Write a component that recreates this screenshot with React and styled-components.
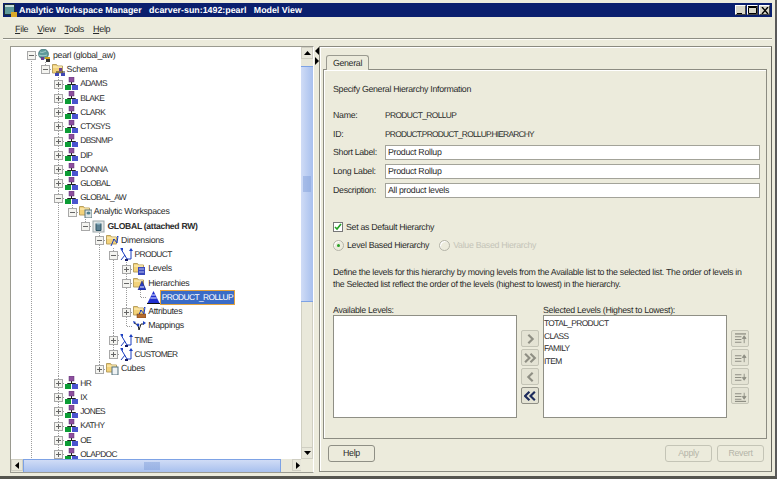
import React from 'react';
import styled, { createGlobalStyle } from 'styled-components';

const BG = '#ecebdc';
const INK = '#2b2b2b';

const GlobalStyle = createGlobalStyle`
  html, body { margin: 0; padding: 0; background: ${BG}; }
  * { box-sizing: border-box; }
`;

const Svg = styled.svg`
  width: 13px;
  height: 13px;
  flex: none;
  display: block;
`;

const UserIcon = () => (
  <Svg viewBox="0 0 13 13">
    <rect x="4" y="0" width="5" height="5" fill="#8d4f9e" stroke="#5d3070" strokeWidth="0.5" />
    <path d="M6.5 5v2M2.5 7.5h8M2.5 7.5v1M10.5 7.5v1" stroke="#222" fill="none" />
    <rect x="0" y="8" width="6" height="5" fill="#0c9c35" />
    <rect x="7" y="8" width="6" height="5" fill="#4a55cf" />
  </Svg>
);

const FolderBase = ({ children }) => (
  <Svg viewBox="0 0 13 13">
    <path d="M0.5 1.5h4l1 1.5h5v7h-10z" fill="#f3d27a" stroke="#b8a060" />
    <path d="M1 4h9" stroke="#fff3c4" />
    {children}
  </Svg>
);

const ARROWS = 'M5 12l3-7 3 4 1-7M8 5l-1 1M12 2l-1 1';

const icons = {
  user: UserIcon,
  pearl: () => (
    <Svg viewBox="0 0 13 13">
      <circle cx="5.5" cy="5" r="5" fill="#5f9a9a" stroke="#37646b" strokeWidth="0.6" />
      <path d="M2 3c2 1 4 0 6-1M1 6c3 1 5 1 8 0" stroke="#b9dcd8" fill="none" strokeWidth="0.8" />
      <rect x="3" y="8" width="3" height="3" fill="#6a3f8f" />
      <rect x="7" y="8" width="5" height="2" fill="#caa020" />
      <rect x="8" y="10" width="4" height="3" fill="#333" />
    </Svg>
  ),
  schema: () => (
    <FolderBase>
      <rect x="7" y="5" width="3" height="3" fill="#6a3f8f" />
      <path d="M4 9h9" stroke="#222" />
      <rect x="3" y="10" width="4" height="3" fill="#3f47b5" />
      <rect x="9" y="10" width="4" height="3" fill="#3f47b5" />
    </FolderBase>
  ),
  aw: () => (
    <FolderBase>
      <rect x="6" y="5" width="7" height="8" fill="#dfe6e6" stroke="#58757d" />
      <ellipse cx="9.5" cy="8" rx="2" ry="1.6" fill="#4f7f8f" />
    </FolderBase>
  ),
  cube: () => (
    <Svg viewBox="0 0 13 13">
      <rect x="1" y="1" width="11" height="11" fill="#e5e8e8" stroke="#9aa5a8" />
      <path d="M4 3.5h5v7H4z" fill="#5b8193" stroke="#2f5565" />
      <ellipse cx="6.5" cy="3.5" rx="2.5" ry="1" fill="#a4c4d0" />
    </Svg>
  ),
  dims: () => (
    <FolderBase>
      <path d={ARROWS} stroke="#1c3fc0" fill="none" />
    </FolderBase>
  ),
  dim: () => (
    <Svg viewBox="0 0 13 13">
      <path d="M1 1l6 10M1 12l4-5M11 2v9M11 11H7" stroke="#1c3fc0" fill="none" />
      <path d="M11 0l2 3H9zM0 0h3v3z" fill="#1c3fc0" />
      <path d="M5 11h3v2H5z" fill="#111a66" />
    </Svg>
  ),
  levels: () => (
    <FolderBase>
      <rect x="5" y="5" width="7" height="8" fill="#3a49bd" />
      <path d="M6 7h5M6 10h5" stroke="#b9c2f0" />
    </FolderBase>
  ),
  hiers: () => (
    <FolderBase>
      <path d="M9 4l4 9H5z" fill="#2a3cc4" stroke="#111a66" strokeWidth="0.5" />
      <path d="M7 10h4" stroke="#f4f4f4" />
    </FolderBase>
  ),
  rollup: () => (
    <Svg viewBox="0 0 13 13">
      <path d="M6.5 0l6 12H.5z" fill="#1f2fd0" />
      <path d="M4.5 4h4M3.3 7h6.4" stroke="#e8ecff" />
      <path d="M0 12.5h13" stroke="#111" />
    </Svg>
  ),
  attrs: () => (
    <FolderBase>
      <path d={ARROWS} stroke="#1c3fc0" fill="none" />
      <rect x="4" y="9" width="9" height="4" fill="#b56a2c" stroke="#6d3f18" strokeWidth="0.5" />
    </FolderBase>
  ),
  maps: () => (
    <Svg viewBox="0 0 13 13">
      <path d="M1 4l4 2 1 5 2-6h3" stroke="#222" fill="none" />
      <circle cx="5" cy="6" r="1.4" fill="#1c3fc0" />
      <path d="M10 2l3 2-3 2zM0 2l3 1-2 2z" fill="#1c3fc0" />
    </Svg>
  ),
  cubes: () => (
    <FolderBase>
      <rect x="6" y="5" width="6" height="8" fill="#eef2f4" stroke="#52707c" />
    </FolderBase>
  ),
};

const u = (label) => ({ label, icon: 'user', closed: true, caps: true });

const tree = {
  label: 'pearl (global_aw)', icon: 'pearl', root: true, children: [
    {
      label: 'Schema', icon: 'schema', last: true, children: [
        u('ADAMS'), u('BLAKE'), u('CLARK'), u('CTXSYS'), u('DBSNMP'), u('DIP'), u('DONNA'), u('GLOBAL'),
        {
          label: 'GLOBAL_AW', icon: 'user', caps: true, children: [
            {
              label: 'Analytic Workspaces', icon: 'aw', last: true, children: [
                {
                  label: 'GLOBAL (attached RW)', icon: 'cube', bold: true, last: true, children: [
                    {
                      label: 'Dimensions', icon: 'dims', children: [
                        {
                          label: 'PRODUCT', icon: 'dim', caps: true, children: [
                            { label: 'Levels', icon: 'levels', closed: true },
                            {
                              label: 'Hierarchies', icon: 'hiers', children: [
                                { label: 'PRODUCT_ROLLUP', icon: 'rollup', caps: true, leaf: true, selected: true, last: true },
                              ],
                            },
                            { label: 'Attributes', icon: 'attrs', closed: true },
                            { label: 'Mappings', icon: 'maps', leaf: true, last: true },
                          ],
                        },
                        { label: 'TIME', icon: 'dim', caps: true, closed: true },
                        { label: 'CUSTOMER', icon: 'dim', caps: true, closed: true, last: true },
                      ],
                    },
                    { label: 'Cubes', icon: 'cubes', closed: true, last: true },
                  ],
                },
              ],
            },
          ],
        },
        u('HR'), u('IX'), u('JONES'), u('KATHY'), u('OE'), u('OLAPDOC'),
      ],
    },
  ],
};

function TreeNode({ node }) {
  const Icon = icons[node.icon];
  return (
    <Node $last={node.last} $root={node.root}>
      <Row>
        <ExpanderSlot>{!node.leaf && <Expander $closed={node.closed} />}</ExpanderSlot>
        <Icon />
        <NodeLabel $bold={node.bold} $caps={node.caps} $selected={node.selected}>{node.label}</NodeLabel>
      </Row>
      {node.children && (
        <Branch>
          {node.children.map((c) => <TreeNode key={c.label} node={c} />)}
        </Branch>
      )}
    </Node>
  );
}

const Chevron = ({ double, left, active }) => {
  const color = active ? '#1d2b5c' : '#8f8f84';
  const points = (x) => (left ? `${x + 4},1 ${x},5 ${x + 4},9` : `${x},1 ${x + 4},5 ${x},9`);
  return (
    <Glyph viewBox="0 0 12 10">
      {double ? (
        <>
          <polyline points={points(1)} fill="none" stroke={color} strokeWidth="2" />
          <polyline points={points(6)} fill="none" stroke={color} strokeWidth="2" />
        </>
      ) : (
        <polyline points={points(4)} fill="none" stroke={color} strokeWidth="2" />
      )}
    </Glyph>
  );
};

const OrderIcon = ({ down, edge }) => (
  <Glyph viewBox="0 0 14 13">
    {edge && !down && <path d="M1 1h12" stroke="#8f8f84" strokeWidth="1.4" />}
    <path d="M1 4h7M1 7h7M1 10h7" stroke="#8f8f84" strokeWidth="1.2" />
    <path
      d={down ? 'M11 3v6M9 7l2 3 2-3z' : 'M11 11V5M9 6l2-3 2 3z'}
      stroke="#8f8f84"
      fill="#8f8f84"
      strokeWidth="1"
    />
    {edge && down && <path d="M1 12.4h12" stroke="#8f8f84" strokeWidth="1.4" />}
  </Glyph>
);

const fields = [
  { label: 'Short Label:', value: 'Product Rollup' },
  { label: 'Long Label:', value: 'Product Rollup' },
  { label: 'Description:', value: 'All product levels' },
];

const selectedLevels = ['TOTAL_PRODUCT', 'CLASS', 'FAMILY', 'ITEM'];

export default function App() {
  return (
    <Window>
      <GlobalStyle />
      <TitleBar>
        <TitleIcon viewBox="0 0 13 13">
          <rect x="0.5" y="0.5" width="10" height="10" fill="#5f9a9a" stroke="#1e3038" />
          <rect x="1" y="1" width="9" height="2" fill="#c6dedb" />
          <rect x="7" y="8" width="6" height="5" fill="#d9a92a" />
        </TitleIcon>
        <TitleText>Analytic Workspace Manager   dcarver-sun:1492:pearl   Model View</TitleText>
        <WindowButtons>
          <WindowButton>
            <svg width="7" height="7" viewBox="0 0 7 7"><path d="M0 6h5v1H0z" fill="#000" /></svg>
          </WindowButton>
          <WindowButton>
            <svg width="9" height="8" viewBox="0 0 9 8"><path d="M.5 1.5h8v6h-8zM0 .5h9" fill="none" stroke="#000" /></svg>
          </WindowButton>
          <WindowButton>
            <svg width="8" height="7" viewBox="0 0 8 7"><path d="M1 0l6 7M7 0L1 7" stroke="#000" strokeWidth="1.4" /></svg>
          </WindowButton>
        </WindowButtons>
      </TitleBar>

      <MenuBar>
        {['File', 'View', 'Tools', 'Help'].map((m) => (
          <MenuItem key={m}><u>{m[0]}</u>{m.slice(1)}</MenuItem>
        ))}
      </MenuBar>

      <Main>
        <LeftPane>
          <TreeArea>
            <Branch $top><TreeNode node={tree} /></Branch>
          </TreeArea>
          <VScroll>
            <ScrollButton>
              <svg width="7" height="4" viewBox="0 0 7 4"><path d="M3.5 0l3.5 4H0z" fill="#000" /></svg>
            </ScrollButton>
            <VThumb><Grip $w={8} $h={16} /></VThumb>
            <VTrack />
            <ScrollButton>
              <svg width="7" height="4" viewBox="0 0 7 4"><path d="M3.5 4L7 0H0z" fill="#000" /></svg>
            </ScrollButton>
          </VScroll>
          <HScroll>
            <ScrollButton>
              <svg width="4" height="7" viewBox="0 0 4 7"><path d="M0 3.5L4 0v7z" fill="#000" /></svg>
            </ScrollButton>
            <HThumb><Grip $w={16} $h={8} /></HThumb>
            <ScrollButton>
              <svg width="4" height="7" viewBox="0 0 4 7"><path d="M4 3.5L0 0v7z" fill="#000" /></svg>
            </ScrollButton>
          </HScroll>
          <Corner />
        </LeftPane>

        <Splitter>
          <svg width="5" height="18" viewBox="0 0 5 18">
            <path d="M0 4l4-4v8zM0 10l4 4-4 4z" fill="#000" />
          </svg>
        </Splitter>

        <RightPane>
          <Tab>General</Tab>
          <TabFrame>
            <Heading>Specify General Hierarchy Information</Heading>
            <InfoGrid>
              <span>Name:</span><Caps>PRODUCT_ROLLUP</Caps>
              <span>ID:</span><Caps $tight>PRODUCT.PRODUCT_ROLLUP.HIERARCHY</Caps>
            </InfoGrid>
            <FieldGrid>
              {fields.map((f) => (
                <React.Fragment key={f.label}>
                  <span>{f.label}</span>
                  <TextField>{f.value}</TextField>
                </React.Fragment>
              ))}
            </FieldGrid>
            <CheckRow>
              <CheckBox>
                <svg width="8" height="8" viewBox="0 0 8 8"><path d="M1 4l2 2 4-5" fill="none" stroke="#21a121" strokeWidth="1.6" /></svg>
              </CheckBox>
              Set as Default Hierarchy
            </CheckRow>
            <RadioRow>
              <RadioOption><Radio $checked />Level Based Hierarchy</RadioOption>
              <RadioOption $disabled><Radio />Value Based Hierarchy</RadioOption>
            </RadioRow>
            <Help>
              Define the levels for this hierarchy by moving levels from the Available list to the selected list. The order of levels in<br />
              the Selected list reflect the order of the levels (highest to lowest) in the hierarchy.
            </Help>
            <Shuttle>
              <ListColumn>
                <span>Available Levels:</span>
                <ListBox />
              </ListColumn>
              <ButtonColumn>
                <IconButton><Chevron /></IconButton>
                <IconButton><Chevron double /></IconButton>
                <IconButton><Chevron left /></IconButton>
                <IconButton $active><Chevron double left active /></IconButton>
              </ButtonColumn>
              <ListColumn>
                <span>Selected Levels (Highest to Lowest):</span>
                <ListBox>
                  {selectedLevels.map((l) => <ListItem key={l}>{l}</ListItem>)}
                </ListBox>
              </ListColumn>
              <ButtonColumn>
                <IconButton><OrderIcon edge /></IconButton>
                <IconButton><OrderIcon /></IconButton>
                <IconButton><OrderIcon down /></IconButton>
                <IconButton><OrderIcon down edge /></IconButton>
              </ButtonColumn>
            </Shuttle>
          </TabFrame>
          <Footer>
            <PushButton>Help</PushButton>
            <FooterRight>
              <PushButton $disabled>Apply</PushButton>
              <PushButton $disabled>Revert</PushButton>
            </FooterRight>
          </Footer>
        </RightPane>
      </Main>
    </Window>
  );
}

const Window = styled.div`
  width: 777px;
  height: 479px;
  overflow: hidden;
  display: flex;
  flex-direction: column;
  padding: 3px 3px 0;
  background: ${BG};
  border-right: 2px solid #5a5a5a;
  border-bottom: 3px solid #55554f;
  font: 8.8px/1 "Liberation Sans", Arial, sans-serif;
  letter-spacing: -0.3px;
  text-rendering: geometricPrecision;
  color: ${INK};
`;

const TitleBar = styled.header`
  height: 14px;
  flex: none;
  display: flex;
  align-items: center;
  background: #0a1f6e;
  color: #fff;
  padding: 0 2px 0 1px;
`;

const TitleIcon = styled.svg`
  width: 13px;
  height: 13px;
  margin-right: 2px;
`;

const TitleText = styled.span`
  font-weight: bold;
  font-size: 8.85px;
  letter-spacing: 0;
  white-space: pre;
  flex: 1;
`;

const WindowButtons = styled.div`
  display: flex;
  gap: 1px;
`;

const WindowButton = styled.span`
  width: 11px;
  height: 10px;
  background: #d8d6c8;
  border: 1px solid;
  border-color: #fff #444 #444 #fff;
  display: flex;
  align-items: center;
  justify-content: center;
  svg { display: block; }
`;

const MenuBar = styled.nav`
  height: 22px;
  flex: none;
  display: flex;
  align-items: center;
  gap: 9px;
  padding: 3px 0 0 12px;
  border-bottom: 1px solid #8d8d83;
  box-shadow: 0 1px 0 #fbfbf5;
`;

const MenuItem = styled.span`
  font-size: 9px;
  u { text-decoration: underline; }
`;

const Main = styled.main`
  flex: 1;
  min-height: 0;
  display: flex;
  padding: 7px 0 3px 7px;
`;

const LeftPane = styled.section`
  width: 304px;
  flex: none;
  display: grid;
  grid-template-columns: 1fr 12px;
  grid-template-rows: 1fr 13px;
  border: 1px solid #9a9a90;
  border-right-color: #fff;
`;

const TreeArea = styled.div`
  background: #fff;
  overflow: hidden;
  min-height: 0;
  padding: 1px 0 0 14px;
`;

const Branch = styled.ul`
  list-style: none;
  margin: 0;
  padding: 0 0 0 ${(p) => (p.$top ? 0 : '13.6px')};
`;

const dots = 'repeating-linear-gradient(to bottom, #9c9c9c 0 1px, transparent 1px 2px)';

const Node = styled.li`
  position: relative;
  &::before {
    content: '';
    position: absolute;
    left: 6px;
    width: 1px;
    top: ${(p) => (p.$root ? '7px' : 0)};
    ${(p) => (p.$last ? 'height: 7px;' : 'bottom: 0;')}
    background: ${dots};
  }
`;

const Row = styled.div`
  height: 14.25px;
  display: flex;
  align-items: center;
  position: relative;
`;

const ExpanderSlot = styled.span`
  width: 13px;
  flex: none;
  height: 100%;
  position: relative;
  &::after {
    content: '';
    position: absolute;
    left: 7px;
    top: 7px;
    width: 6px;
    height: 1px;
    background: repeating-linear-gradient(to right, #9c9c9c 0 1px, transparent 1px 2px);
  }
`;

const Expander = styled.span`
  position: absolute;
  z-index: 1;
  left: 2px;
  top: 3px;
  width: 9px;
  height: 9px;
  background: #f4f4f0;
  border: 1px solid #a8a8a8;
  &::before {
    content: '';
    position: absolute;
    left: 1px;
    top: 3px;
    width: 5px;
    height: 1px;
    background: #666;
  }
  &::after {
    content: '';
    display: ${(p) => (p.$closed ? 'block' : 'none')};
    position: absolute;
    left: 3px;
    top: 1px;
    width: 1px;
    height: 5px;
    background: #666;
  }
`;

const NodeLabel = styled.span`
  margin-left: 1px;
  padding: 2px 1px;
  white-space: nowrap;
  font-size: ${(p) => (p.$caps ? '8.4px' : p.$bold ? '8.6px' : '8.8px')};
  letter-spacing: ${(p) => (p.$caps ? '-0.6px' : '-0.3px')};
  font-weight: ${(p) => (p.$bold ? 'bold' : 'normal')};
  color: ${(p) => (p.$selected ? '#fff' : INK)};
  background: ${(p) => (p.$selected ? '#3a6bc6' : 'transparent')};
  outline: ${(p) => (p.$selected ? '1px solid #e3a33f' : 'none')};
`;

const VScroll = styled.div`
  display: flex;
  flex-direction: column;
  background: #e9e8da;
  min-height: 0;
`;

const HScroll = styled.div`
  display: flex;
  background: #e9e8da;
  min-width: 0;
`;

const Corner = styled.div`
  background: ${BG};
`;

const ScrollButton = styled.span`
  width: 12px;
  height: 12px;
  flex: none;
  display: flex;
  align-items: center;
  justify-content: center;
  background: #e8e7da;
  border: 1px solid #cfcec2;
  svg { display: block; }
`;

const VThumb = styled.div`
  height: 236px;
  margin-top: 7px;
  flex: none;
  display: flex;
  align-items: center;
  justify-content: center;
  background: linear-gradient(to right, #d0dcf6, #a8c0ee);
  border-top: 1px solid #7da2e5;
  border-bottom: 1px solid #7da2e5;
`;

const VTrack = styled.div`
  flex: 1;
  border: 1px solid #d0cfc2;
  border-top: none;
  border-bottom: none;
`;

const HThumb = styled.div`
  width: 258px;
  flex: none;
  display: flex;
  align-items: center;
  justify-content: center;
  margin-right: 11px;
  background: linear-gradient(to bottom, #d0dcf6, #a8c0ee);
  border-left: 1px solid #7da2e5;
  border-right: 1px solid #7da2e5;
  border-top: 1px solid #7da2e5;
`;

const Grip = styled.span`
  width: ${(p) => p.$w}px;
  height: ${(p) => p.$h}px;
  background-image: radial-gradient(#7f9dd8 0.6px, transparent 0.8px);
  background-size: 2px 2px;
`;

const Splitter = styled.div`
  width: 5px;
  flex: none;
  padding: 1px 0 0 1px;
  svg { display: block; }
`;

const RightPane = styled.section`
  flex: 1;
  min-width: 0;
  display: flex;
  flex-direction: column;
  align-items: flex-start;
  padding: 7px 4px 0 3px;
  border: 1px solid #8a8a80;
  border-right-color: #66665e;
  box-shadow: inset 1px 1px 0 #fff;
  margin-bottom: 1px;
`;

const Tab = styled.div`
  margin-left: 3px;
  width: 43px;
  height: 15px;
  display: flex;
  align-items: center;
  justify-content: center;
  border: 1px solid #9a9a90;
  border-bottom: none;
  border-radius: 3px 3px 0 0;
  position: relative;
  top: 1px;
  background: ${BG};
  z-index: 1;
`;

const TabFrame = styled.div`
  align-self: stretch;
  height: 370px;
  flex: none;
  padding: 15px 6px 0 9px;
  border: 1px solid #8c8c82;
  box-shadow: inset 1px 1px 0 #fff;
  display: flex;
  flex-direction: column;
`;

const Heading = styled.div`
  height: 10px;
`;

const InfoGrid = styled.div`
  display: grid;
  grid-template-columns: 52px 1fr;
  grid-auto-rows: 19px;
  margin-top: 11px;
  align-items: center;
`;

const Caps = styled.span`
  font-size: 8.4px;
  letter-spacing: ${(p) => (p.$tight ? '-0.75px' : '-0.6px')};
`;

const FieldGrid = styled.div`
  display: grid;
  grid-template-columns: 52px 1fr;
  grid-auto-rows: 15px;
  row-gap: 4px;
  margin-top: 1px;
  align-items: center;
`;

const TextField = styled.div`
  height: 15px;
  display: flex;
  align-items: center;
  padding-left: 2px;
  background: #fff;
  border: 1px solid #a3a399;
`;

const CheckRow = styled.label`
  display: flex;
  align-items: center;
  gap: 3px;
  margin-top: 23px;
  height: 12px;
`;

const CheckBox = styled.span`
  width: 10px;
  height: 10px;
  background: #fff;
  border: 1px solid #777;
  display: flex;
  align-items: center;
  justify-content: center;
`;

const RadioRow = styled.div`
  display: flex;
  gap: 10px;
  margin-top: 6px;
  height: 12px;
`;

const RadioOption = styled.label`
  display: flex;
  align-items: center;
  gap: 3px;
  color: ${(p) => (p.$disabled ? '#c4c4b8' : INK)};
`;

const Radio = styled.span`
  width: 11px;
  height: 11px;
  border-radius: 50%;
  background: ${BG};
  border: 1px solid #b4b4a8;
  box-shadow: inset 1px 1px 0 #fff;
  display: flex;
  align-items: center;
  justify-content: center;
  &::after {
    content: '';
    display: ${(p) => (p.$checked ? 'block' : 'none')};
    width: 3px;
    height: 3px;
    border-radius: 50%;
    background: #27a027;
  }
`;

const Help = styled.p`
  margin: 15px 0 0;
  line-height: 12px;
  white-space: nowrap;
`;

const Shuttle = styled.div`
  display: flex;
  margin-top: 16px;
`;

const ListColumn = styled.div`
  width: 184px;
  display: flex;
  flex-direction: column;
  & > span { height: 9px; line-height: 9px; }
`;

const ListBox = styled.div`
  height: 103px;
  background: #fff;
  border: 1px solid #8f8f85;
  padding-top: 1px;
`;

const ListItem = styled.div`
  height: 12.5px;
  display: flex;
  align-items: center;
  font-size: 8.4px;
  letter-spacing: -0.6px;
`;

const ButtonColumn = styled.div`
  width: 26px;
  display: flex;
  flex-direction: column;
  align-items: center;
  gap: 2px;
  padding-top: 24px;
`;

const IconButton = styled.span`
  width: 18px;
  height: 17px;
  display: flex;
  align-items: center;
  justify-content: center;
  background: #e4e3d4;
  border: 1px solid ${(p) => (p.$active ? '#8f8f85' : '#c4c4b6')};
  border-radius: 2px;
`;

const Glyph = styled.svg`
  width: 13px;
  height: 12px;
  display: block;
`;

const Footer = styled.footer`
  align-self: stretch;
  flex: 1;
  display: flex;
  justify-content: space-between;
  align-items: flex-start;
  padding: 6px 3px 0 5px;
`;

const FooterRight = styled.div`
  display: flex;
  gap: 5px;
`;

const PushButton = styled.button`
  width: 47px;
  height: 17px;
  padding: 0;
  font: inherit;
  letter-spacing: inherit;
  background: ${BG};
  color: ${(p) => (p.$disabled ? '#b4b4a8' : INK)};
  border: 1px solid ${(p) => (p.$disabled ? '#c4c4b6' : '#8f8f85')};
  border-radius: 3px;
`;
